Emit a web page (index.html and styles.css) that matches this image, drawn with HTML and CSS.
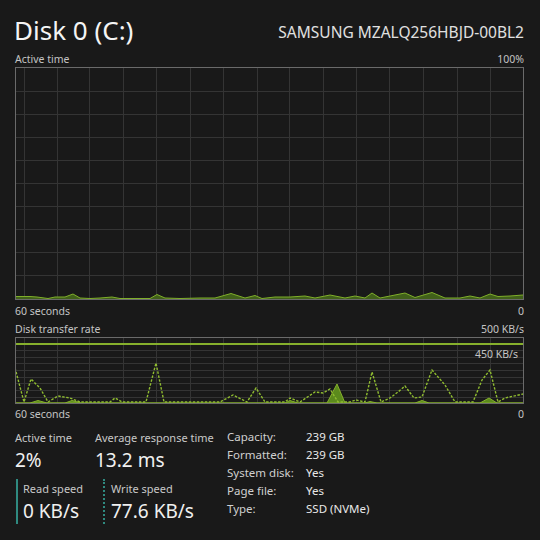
FILE: index.html
```html
<!DOCTYPE html>
<html>
<head>
<meta charset="utf-8">
<link rel="stylesheet" href="styles.css">
</head>
<body>
<div class="page">
  <header class="title-row">
    <h1 class="title">Disk 0 (C:)</h1>
    <span class="model">SAMSUNG MZALQ256HBJD-00BL2</span>
  </header>

  <div class="axis-row axis-top"><span>Active time</span><span>100%</span></div>
  <svg class="chart chart-active" width="509" height="233" viewBox="0 0 509 233">
    <g class="grid">
      <line x1="9.5" y1="0" x2="9.5" y2="233"/><line x1="42.5" y1="0" x2="42.5" y2="233"/><line x1="74.5" y1="0" x2="74.5" y2="233"/><line x1="108.5" y1="0" x2="108.5" y2="233"/><line x1="141.5" y1="0" x2="141.5" y2="233"/><line x1="175.5" y1="0" x2="175.5" y2="233"/><line x1="208.5" y1="0" x2="208.5" y2="233"/><line x1="242.5" y1="0" x2="242.5" y2="233"/><line x1="274.5" y1="0" x2="274.5" y2="233"/><line x1="308.5" y1="0" x2="308.5" y2="233"/><line x1="341.5" y1="0" x2="341.5" y2="233"/><line x1="374.5" y1="0" x2="374.5" y2="233"/><line x1="408.5" y1="0" x2="408.5" y2="233"/><line x1="442.5" y1="0" x2="442.5" y2="233"/><line x1="475.5" y1="0" x2="475.5" y2="233"/>
      <line x1="0" y1="24.5" x2="509" y2="24.5"/><line x1="0" y1="47.5" x2="509" y2="47.5"/><line x1="0" y1="70.5" x2="509" y2="70.5"/><line x1="0" y1="93.5" x2="509" y2="93.5"/><line x1="0" y1="116.5" x2="509" y2="116.5"/><line x1="0" y1="139.5" x2="509" y2="139.5"/><line x1="0" y1="162.5" x2="509" y2="162.5"/><line x1="0" y1="185.5" x2="509" y2="185.5"/><line x1="0" y1="208.5" x2="509" y2="208.5"/>
    </g>
    <polygon class="fill" points="0,232 0,229.5 15,229.5 22,230 33,231.5 40,230 50,230 58,227 65,231 75,231.5 85,231 97,230 105,231.5 125,231.5 135,231.5 142,227.5 150,231 165,231.5 185,231 200,231 216,226.5 230,231 240,228.5 247,231.5 260,230 275,230 290,229 300,231 315,228 330,231 340,229 350,231 357,226 365,231 380,228 390,226 400,230.5 417,225.5 430,231 445,231 455,229 465,231 475,227 483,229.5 495,229 508,228 508,232"/>
    <polyline class="line" points="0,229.5 15,229.5 22,230 33,231.5 40,230 50,230 58,227 65,231 75,231.5 85,231 97,230 105,231.5 125,231.5 135,231.5 142,227.5 150,231 165,231.5 185,231 200,231 216,226.5 230,231 240,228.5 247,231.5 260,230 275,230 290,229 300,231 315,228 330,231 340,229 350,231 357,226 365,231 380,228 390,226 400,230.5 417,225.5 430,231 445,231 455,229 465,231 475,227 483,229.5 495,229 508,228"/>
    <rect class="frame" x="0.5" y="0.5" width="508" height="232"/>
  </svg>
  <div class="axis-row axis-bottom"><span>60 seconds</span><span>0</span></div>

  <div class="axis-row axis-top2"><span>Disk transfer rate</span><span>500 KB/s</span></div>
  <div class="chart-wrap">
    <svg class="chart chart-rate" width="509" height="67" viewBox="0 0 509 67">
      <g class="grid">
        <line x1="9.5" y1="0" x2="9.5" y2="67"/><line x1="42.5" y1="0" x2="42.5" y2="67"/><line x1="74.5" y1="0" x2="74.5" y2="67"/><line x1="108.5" y1="0" x2="108.5" y2="67"/><line x1="141.5" y1="0" x2="141.5" y2="67"/><line x1="175.5" y1="0" x2="175.5" y2="67"/><line x1="208.5" y1="0" x2="208.5" y2="67"/><line x1="242.5" y1="0" x2="242.5" y2="67"/><line x1="274.5" y1="0" x2="274.5" y2="67"/><line x1="308.5" y1="0" x2="308.5" y2="67"/><line x1="341.5" y1="0" x2="341.5" y2="67"/><line x1="374.5" y1="0" x2="374.5" y2="67"/><line x1="408.5" y1="0" x2="408.5" y2="67"/><line x1="442.5" y1="0" x2="442.5" y2="67"/><line x1="475.5" y1="0" x2="475.5" y2="67"/>
        <line x1="0" y1="13.5" x2="509" y2="13.5"/><line x1="0" y1="20.5" x2="509" y2="20.5"/><line x1="0" y1="26.5" x2="509" y2="26.5"/><line x1="0" y1="33.5" x2="509" y2="33.5"/><line x1="0" y1="40.5" x2="509" y2="40.5"/><line x1="0" y1="46.5" x2="509" y2="46.5"/><line x1="0" y1="53.5" x2="509" y2="53.5"/><line x1="0" y1="60.5" x2="509" y2="60.5"/>
      </g>
      <line class="maxline" x1="0" y1="7" x2="509" y2="7"/>
      <polygon class="fill" points="0,66 15,66 23,63.5 32,66 50,66 57,63.5 66,66 270,66 275,63.5 283,66 312,66 322,47 330,66 350,66 355,64.5 362,66 400,66 407,63.5 414,66 465,66 474,61 482,66 508,66 508,66"/>
      <polyline class="dash" points="0,31 9,65 16,42 25,51 33,65 43,59 55,61 65,65 95,65 100,61 107,65 131,65 141,26 149,65 205,65 218,58 232,65 241,51 250,65 270,65 275,61 285,65 300,55 308,56 315,52 323,65 335,65 341,63 350,65 357,35 366,65 375,61 383,55 390,49 399,61 407,60 417,33 430,48 440,65 458,65 467,43 475,33 483,65 490,61 508,57"/>
      <rect class="frame" x="0.5" y="0.5" width="508" height="66"/>
    </svg>
    <span class="chart-note">450 KB/s</span>
  </div>
  <div class="axis-row axis-bottom2"><span>60 seconds</span><span>0</span></div>

  <section class="stats">
    <div class="stats-left">
      <div class="stat-pair">
        <div class="stat first">
          <div class="stat-label">Active time</div>
          <div class="stat-value">2%</div>
        </div>
        <div class="stat">
          <div class="stat-label">Average response time</div>
          <div class="stat-value">13.2 ms</div>
        </div>
      </div>
      <div class="stat-pair">
        <div class="stat speed read">
          <div class="stat-label">Read speed</div>
          <div class="stat-value">0 KB/s</div>
        </div>
        <div class="stat speed write">
          <div class="stat-label">Write speed</div>
          <div class="stat-value">77.6 KB/s</div>
        </div>
      </div>
    </div>
    <dl class="props">
      <dt>Capacity:</dt><dd>239 GB</dd>
      <dt>Formatted:</dt><dd>239 GB</dd>
      <dt>System disk:</dt><dd>Yes</dd>
      <dt>Page file:</dt><dd>Yes</dd>
      <dt>Type:</dt><dd>SSD (NVMe)</dd>
    </dl>
  </section>
</div>
</body>
</html>
```

FILE: styles.css
```css
html, body {
  margin: 0;
  padding: 0;
  background: #191919;
}
body {
  width: 540px;
  height: 540px;
  overflow: hidden;
  font-family: "Noto Sans", "Open Sans", sans-serif;
  color: #e6e6e6;
}
.page {
  padding: 0 16px 0 15px;
}
.title-row {
  display: flex;
  justify-content: space-between;
  align-items: flex-end;
  height: 50px;
}
.title {
  margin: 0;
  font-weight: 400;
  font-size: 26px;
  line-height: 32px;
  color: #f4f4f4;
  margin-left: -1px;
  padding-bottom: 4px;
}
.model {
  font-size: 15.5px;
  line-height: 20px;
  color: #e0e0e0;
  padding-bottom: 8px;
}
.axis-row {
  display: flex;
  justify-content: space-between;
  font-size: 10.5px;
  line-height: 14px;
  color: #c4c4c4;
}
.axis-top { height: 17px; align-items: flex-end; padding-bottom: 1px; box-sizing: border-box; }
.axis-bottom { height: 18px; align-items: center; padding-top: 3px; box-sizing: border-box; }
.axis-top2 { height: 19px; align-items: center; padding-top: 2px; box-sizing: border-box; }
.axis-bottom2 { height: 17px; align-items: center; padding-top: 3px; box-sizing: border-box; }
.chart {
  display: block;
}
.chart .grid line {
  stroke: #343434;
  stroke-width: 1;
}
.chart .frame {
  fill: none;
  stroke: #6a6a6a;
  stroke-width: 1;
}
.chart .fill {
  fill: #41601a;
  stroke: none;
}
.chart .line {
  fill: none;
  stroke: #7fae2a;
  stroke-width: 1;
}
.chart .maxline {
  stroke: #86b02c;
  stroke-width: 2;
}
.chart-rate .fill {
  fill: #5b8a1c;
  stroke: #86b02c;
  stroke-width: 1;
}
.chart .dash {
  fill: none;
  stroke: #8fbb30;
  stroke-width: 1.4;
  stroke-dasharray: 2.5 1.5;
}
.chart-wrap {
  position: relative;
}
.chart-note {
  position: absolute;
  right: 6px;
  top: 10px;
  font-size: 10.5px;
  line-height: 14px;
  color: #c4c4c4;
}
.stats {
  display: flex;
  margin-top: 9px;
}
.stats-left {
  width: 212px;
  display: flex;
  flex-direction: column;
  gap: 7px;
}
.stat-pair {
  display: flex;
}
.stat.first {
  width: 80px;
}
.stat-label {
  font-size: 11px;
  line-height: 16px;
  margin-bottom: 2px;
  color: #c8c8c8;
}
.stat-value {
  font-size: 19px;
  line-height: 24px;
  color: #f0f0f0;
}
.speed {
  box-sizing: border-box;
  padding-left: 5px;
  padding-top: 2px;
  padding-bottom: 1px;
  border-left: 2px solid #2f8a80;
}
.speed.read {
  width: 87px;
  margin-left: 1px;
}
.speed.write {
  padding-left: 6px;
  border-left: 2px dotted #2f8a80;
}
.props {
  margin: 0;
  margin-top: -2px;
  display: grid;
  grid-template-columns: 79px auto;
  align-content: start;
  font-size: 11.5px;
  line-height: 18px;
  color: #d0d0d0;
}
.props dt, .props dd {
  margin: 0;
}
.props dd {
  color: #e8e8e8;
}
```
